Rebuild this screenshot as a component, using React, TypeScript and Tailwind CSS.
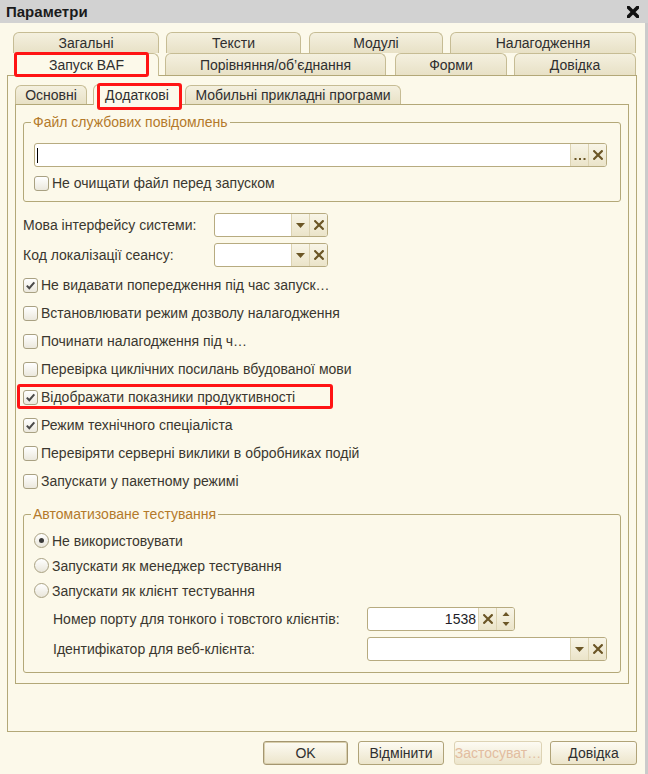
import React from "react";

const border = "border-[#b3a878]";
const ink = "text-[#3a372f]";

function XIcon({ s = 10, w = 2.2, color = "#6b5626" }: { s?: number; w?: number; color?: string }) {
  return (
    <svg width={s} height={s} viewBox="0 0 10 10">
      <path d="M1.2 1.2L8.8 8.8M8.8 1.2L1.2 8.8" stroke={color} strokeWidth={w} strokeLinecap="square" />
    </svg>
  );
}

function Caret() {
  return (
    <svg width="9" height="5" viewBox="0 0 9 5">
      <polygon points="0,0 9,0 4.5,5" fill="#6b5626" />
    </svg>
  );
}

function Dots() {
  return (
    <svg width="12" height="12" viewBox="0 0 12 12">
      <rect x="0.5" y="9" width="2" height="2" fill="#6b5626" />
      <rect x="5" y="9" width="2" height="2" fill="#6b5626" />
      <rect x="9.5" y="9" width="2" height="2" fill="#6b5626" />
    </svg>
  );
}

function Spin() {
  return (
    <svg width="8" height="16" viewBox="0 0 8 16">
      <polygon points="4,1 7.5,5 0.5,5" fill="#6b5626" />
      <polygon points="0.5,11 7.5,11 4,15" fill="#6b5626" />
    </svg>
  );
}

function FBtn({ children }: { children: React.ReactNode }) {
  return (
    <div className="w-[18px] h-full shrink-0 flex items-center justify-center border-l border-[#dcd3b2] bg-gradient-to-b from-[#f8f5e7] to-[#ebe4c9]">
      {children}
    </div>
  );
}

function Field({ w, children, value, cursor }: { w: string; children: React.ReactNode; value?: string; cursor?: boolean }) {
  return (
    <div className={`${w} h-[24px] flex border border-[#b7ab80] rounded-[3px] bg-white overflow-hidden`}>
      <div className="flex-1 flex items-center justify-end pr-[2px] text-[#1d1d28]">
        {cursor && <div className="mr-auto ml-[2px] w-px h-[15px] bg-black" />}
        {value}
      </div>
      {children}
    </div>
  );
}

function Check({ on }: { on?: boolean }) {
  return (
    <span className="w-[15px] h-[15px] shrink-0 flex items-center justify-center border border-[#a9a182] rounded-[3px] bg-gradient-to-b from-white to-[#ebe8dd]">
      {on && (
        <svg width="11" height="11" viewBox="0 0 11 11">
          <path d="M1.8 5.6L4.3 8.2L9.3 2.4" stroke="#4a4a4a" strokeWidth="2" fill="none" />
        </svg>
      )}
    </span>
  );
}

function Radio({ on }: { on?: boolean }) {
  return (
    <span className="w-[15px] h-[15px] shrink-0 flex items-center justify-center border border-[#a9a182] rounded-full bg-gradient-to-b from-white to-[#e9e6da]">
      {on && <span className="w-[5px] h-[5px] rounded-full bg-[#3a3a3a]" />}
    </span>
  );
}

const tabBase = "h-full flex items-center justify-center border border-b-0 border-[#c6bc94] rounded-t-[6px] text-[#2f2f2f]";
const tabIdle = "bg-gradient-to-b from-[#f4f0df] to-[#e8e1c6]";

const row1 = [
  { label: "Загальні", cls: "ml-[13px] w-[146px]" },
  { label: "Тексти", cls: "ml-[7px] w-[135px]" },
  { label: "Модулі", cls: "ml-[8px] w-[134px]" },
  { label: "Налагодження", cls: "ml-[7px] w-[186px]" },
];

const row2 = [
  { label: "Порівняння/об’єднання", cls: "ml-[6px] w-[221px]" },
  { label: "Форми", cls: "ml-[9px] w-[112px]" },
  { label: "Довідка", cls: "ml-[7px] w-[122px]" },
];

const flags = [
  { t: "Не видавати попередження під час запуск…", on: true },
  { t: "Встановлювати режим дозволу налагодження" },
  { t: "Починати налагодження під ч…" },
  { t: "Перевірка циклічних посилань вбудованої мови" },
  { t: "Відображати показники продуктивності", on: true, mark: true },
  { t: "Режим технічного спеціаліста", on: true },
  { t: "Перевіряти серверні виклики в обробниках подій" },
  { t: "Запускати у пакетному режимі" },
];

const btn = "h-[24px] flex items-center justify-center rounded-[3px] border bg-gradient-to-b from-[#fdfbf3] to-[#ece5cb]";

export default function App() {
  return (
    <div className={`w-[648px] h-[774px] flex flex-col bg-[#fcf9ea] text-[14px] leading-[16px] ${ink} font-['Liberation_Sans',Arial,sans-serif]`}>
      <div className="h-[23px] shrink-0 flex items-center justify-between pl-[6px] pr-[9px] bg-[#d2d2d2]">
        <span className="text-[15px] font-bold text-[#1b1b1b]">Параметри</span>
        <XIcon s={12} w={3} color="#111" />
      </div>

      <div className="flex-1 flex flex-col pt-[9px] border-r-[3px] border-[#cbcbcb]">
        <div className="flex h-[21px]">
          {row1.map((t) => (
            <div key={t.label} className={`${t.cls} ${tabBase} ${tabIdle}`}>{t.label}</div>
          ))}
        </div>
        <div className="flex h-[22px] items-start relative z-10">
          <div className="ml-[14px] w-[145px] h-[23px] relative flex items-center justify-center border border-b-0 border-[#c6bc94] rounded-t-[6px] bg-[#fcf9ea] text-[#2f2f2f]">
            Запуск BAF
            <div className="absolute left-[-1px] top-[-2px] w-[135px] h-[25px] border-[3px] border-[#ff1414] rounded-[3px]" />
          </div>
          {row2.map((t) => (
            <div key={t.label} className={`${t.cls} ${tabBase} ${tabIdle}`}>{t.label}</div>
          ))}
        </div>

        <div className={`ml-[7px] w-[630px] h-[657px] border ${border} pt-[9px] px-[7px]`}>
          <div className="flex h-[19px] items-end relative z-10">
            <div className={`w-[72px] ${tabBase} ${tabIdle}`}>Основні</div>
            <div className="ml-[6px] w-[88px] h-[21px] mb-[-1px] relative flex items-center justify-center border border-b-0 border-[#c6bc94] rounded-t-[6px] bg-[#fcf9ea] text-[#2f2f2f]">
              Додаткові
              <div className="absolute left-[3px] top-[-2px] w-[85px] h-[27px] border-[3px] border-[#ff1414] rounded-[3px]" />
            </div>
            <div className={`ml-[4px] w-[216px] ${tabBase} ${tabIdle}`}>Мобильні прикладні програми</div>
          </div>

          <div className={`h-[580px] border ${border} px-[7px]`}>
            <fieldset className={`mt-[10px] border ${border} rounded-[3px] pl-[10px] pr-[13px] pt-[13px] pb-[10px]`}>
              <legend className="ml-[-3px] px-[2px] leading-[15px] text-[#b47a2a]">Файл службових повідомлень</legend>
              <Field w="w-full" cursor>
                <FBtn><Dots /></FBtn>
                <FBtn><XIcon /></FBtn>
              </Field>
              <label className="mt-[8px] h-[16px] flex items-center gap-[3px]">
                <Check />
                <span>Не очищати файл перед запуском</span>
              </label>
            </fieldset>

            <div className="mt-[11px] h-[24px] flex items-center">
              <span className="w-[191px]">Мова інтерфейсу системи:</span>
              <Field w="w-[114px]">
                <FBtn><Caret /></FBtn>
                <FBtn><XIcon /></FBtn>
              </Field>
            </div>
            <div className="mt-[6px] h-[24px] flex items-center">
              <span className="w-[191px]">Код локалізації сеансу:</span>
              <Field w="w-[114px]">
                <FBtn><Caret /></FBtn>
                <FBtn><XIcon /></FBtn>
              </Field>
            </div>

            <div className="mt-[4px] flex flex-col">
              {flags.map((f) => (
                <label key={f.t} className="h-[28px] flex items-center gap-[3px] relative">
                  <Check on={f.on} />
                  <span>{f.t}</span>
                  {f.mark && <div className="absolute left-[-6px] top-[1px] w-[316px] h-[25px] border-[3px] border-[#ff1414] rounded-[3px]" />}
                </label>
              ))}
            </div>

            <fieldset className={`mt-[12px] border ${border} rounded-[3px] pl-[10px] pr-[13px] pt-[6px] pb-[11px]`}>
              <legend className="ml-[-3px] px-[2px] leading-[15px] text-[#b47a2a]">Автоматизоване тестування</legend>
              <label className="h-[25px] flex items-center gap-[3px]"><Radio on /><span>Не використовувати</span></label>
              <label className="h-[25px] flex items-center gap-[3px]"><Radio /><span>Запускати як менеджер тестування</span></label>
              <label className="h-[25px] flex items-center gap-[3px]"><Radio /><span>Запускати як клієнт тестування</span></label>
              <div className="mt-[4px] h-[24px] pl-[19px] flex items-center">
                <span className="w-[314px]">Номер порту для тонкого і товстого клієнтів:</span>
                <Field w="w-[148px]" value="1538">
                  <FBtn><XIcon /></FBtn>
                  <FBtn><Spin /></FBtn>
                </Field>
              </div>
              <div className="mt-[6px] h-[24px] pl-[19px] flex items-center">
                <span className="w-[314px]">Ідентифікатор для веб-клієнта:</span>
                <Field w="w-[240px]">
                  <FBtn><Caret /></FBtn>
                  <FBtn><XIcon /></FBtn>
                </Field>
              </div>
            </fieldset>
          </div>
        </div>

        <div className="mt-[9px] flex">
          <button className={`ml-[263px] w-[85px] ${btn} border-[#a49670] shadow-[inset_0_0_0_1px_#d9cfad] text-[#2f2f2f]`}>OK</button>
          <button className={`ml-[10px] w-[86px] ${btn} border-[#b0a378] text-[#2f2f2f]`}>Відмінити</button>
          <button className={`ml-[10px] w-[88px] ${btn} border-[#ddd3b4] text-[#e2bda0]`}>Застосуват…</button>
          <button className={`ml-[8px] w-[87px] ${btn} border-[#b0a378] text-[#2f2f2f]`}>Довідка</button>
        </div>
      </div>
    </div>
  );
}
